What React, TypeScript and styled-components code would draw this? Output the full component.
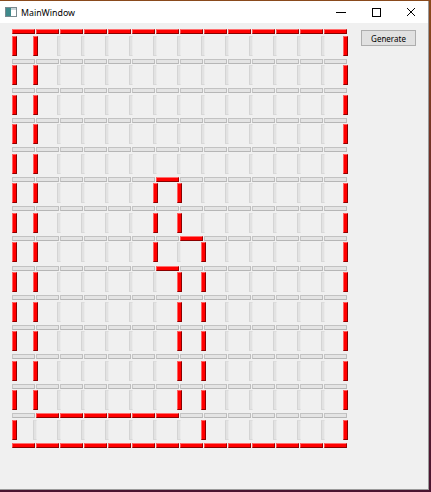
import React from 'react';
import styled, { createGlobalStyle } from 'styled-components';

const GlobalStyle = createGlobalStyle`
  html, body { margin: 0; padding: 0; }
  body {
    width: 431px;
    height: 492px;
    overflow: hidden;
    background: linear-gradient(180deg, #8a4a1c 0%, #6a2a2a 40%, #4a1430 100%);
    font-family: "Noto Sans", "Open Sans", Arial, sans-serif;
  }
`;

const Window = styled.div`
  margin-top: 1px;
  width: 428px;
  height: 488px;
  background: #f0f0f0;
  border-right: 1px solid #9a9a9a;
  border-bottom: 1px solid #9a9a9a;
  display: flex;
  flex-direction: column;
  position: relative;
`;

const TitleBar = styled.div`
  height: 22px;
  background: #ffffff;
  display: flex;
  align-items: center;
  padding-left: 5px;
  flex-shrink: 0;
`;

const TitleText = styled.span`
  font-family: "Noto Sans", "Open Sans", Arial, sans-serif;
  font-size: 8.8px;
  color: #000;
  margin-left: 4px;
  margin-top: 1px;
`;

const Controls = styled.div`
  margin-left: auto;
  display: flex;
  height: 100%;
`;

const CtrlButton = styled.div`
  width: 35px;
  height: 100%;
  display: flex;
  align-items: center;
  justify-content: center;
`;

const Body = styled.div`
  display: flex;
  align-items: flex-start;
  padding: 6px 0 0 12px;
  flex: 1;
`;

const Board = styled.div`
  display: flex;
  flex-direction: column;
  width: 336px;
`;

const WallRow = styled.div`
  display: flex;
  gap: 1px;
  height: 5px;
`;

const HWall = styled.div<{ $on: boolean }>`
  width: 23px;
  height: 5px;
  box-sizing: border-box;
  background: ${(p) => (p.$on ? '#ff0000' : '#e4e4e4')};
  border-top: 1px solid ${(p) => (p.$on ? '#ff7070' : '#c2c2c2')};
  border-left: 1px solid ${(p) => (p.$on ? '#ff5050' : '#c6c6c6')};
  border-right: 1px solid ${(p) => (p.$on ? '#9a0000' : '#bdbdbd')};
  border-bottom: 1px solid ${(p) => (p.$on ? '#8a0000' : '#b6b6b6')};
`;

const CellRow = styled.div`
  height: 24.57px;
  display: grid;
  grid-template-columns: 21px repeat(12, 24px) 22px 5px;
  align-items: start;
`;

const VWall = styled.div<{ $on: boolean }>`
  margin-top: 1.5px;
  width: ${(p) => (p.$on ? 5 : 4)}px;
  height: 20px;
  box-sizing: border-box;
  background: ${(p) => (p.$on ? '#ff0000' : '#e2e2e2')};
  border-left: 1px solid ${(p) => (p.$on ? '#ff6060' : '#d4d4d4')};
  border-top: 1px solid ${(p) => (p.$on ? '#ff6060' : '#dcdcdc')};
  border-right: 1px solid ${(p) => (p.$on ? '#8a0000' : '#ebebeb')};
  border-bottom: 1px solid ${(p) => (p.$on ? '#8a0000' : '#d8d8d8')};
`;

const GenerateButton = styled.button`
  margin-left: 13px;
  margin-top: 1px;
  width: 55px;
  height: 16px;
  padding: 0;
  box-sizing: border-box;
  background: #e1e1e1;
  border: 1px solid #adadad;
  font-family: "Noto Sans", "Open Sans", Arial, sans-serif;
  font-size: 8px;
  color: #000;
  display: flex;
  align-items: center;
  justify-content: center;
`;

const Grip = styled.div`
  position: absolute;
  right: 1px;
  bottom: 1px;
  width: 7px;
  height: 7px;
`;

const hRed = (line: number, col: number): boolean => {
  if (line === 0 || line === 14) return true;
  if (line === 5 && col === 6) return true;
  if (line === 7 && col === 7) return true;
  if (line === 8 && col === 6) return true;
  if (line === 13 && col >= 1 && col <= 6) return true;
  return false;
};

const vRed = (row: number, j: number): boolean => {
  if (j === 0 || j === 14) return true;
  if (j === 1) return row <= 12;
  if (j === 6) return row >= 5 && row <= 7;
  if (j === 7) return row === 5 || row === 6 || (row >= 8 && row <= 12);
  if (j === 8) return row >= 7;
  return false;
};

const AppIcon = () => (
  <svg width="12" height="10" viewBox="0 0 12 10">
    <rect x="0.5" y="0.5" width="11" height="9" fill="#ffffff" stroke="#7a8a90" />
    <rect x="1" y="1" width="5" height="8" fill="#3f8a8c" />
    <rect x="6" y="1" width="5" height="2" fill="#c8d4d8" />
  </svg>
);

export default function App() {
  const lines = Array.from({ length: 15 }, (_, i) => i);
  const cols = Array.from({ length: 14 }, (_, i) => i);
  const js = Array.from({ length: 15 }, (_, i) => i);
  return (
    <>
      <GlobalStyle />
      <Window>
        <TitleBar>
          <AppIcon />
          <TitleText>MainWindow</TitleText>
          <Controls>
            <CtrlButton>
              <svg width="10" height="10" viewBox="0 0 10 10">
                <line x1="0" y1="5.5" x2="10" y2="5.5" stroke="#000" strokeWidth="1" />
              </svg>
            </CtrlButton>
            <CtrlButton>
              <svg width="10" height="10" viewBox="0 0 10 10">
                <rect x="1.5" y="1.5" width="8" height="8" fill="none" stroke="#000" strokeWidth="1" />
              </svg>
            </CtrlButton>
            <CtrlButton>
              <svg width="10" height="10" viewBox="0 0 10 10">
                <path d="M1 1 L9 9 M9 1 L1 9" stroke="#000" strokeWidth="1" />
              </svg>
            </CtrlButton>
          </Controls>
        </TitleBar>
        <Body>
          <Board>
            {lines.map((line) => (
              <React.Fragment key={line}>
                <WallRow>
                  {cols.map((c) => (
                    <HWall key={c} $on={hRed(line, c)} />
                  ))}
                </WallRow>
                {line < 14 && (
                  <CellRow>
                    {js.map((j) => (
                      <VWall key={j} $on={vRed(line, j)} />
                    ))}
                  </CellRow>
                )}
              </React.Fragment>
            ))}
          </Board>
          <GenerateButton>Generate</GenerateButton>
        </Body>
        <Grip>
          <svg width="7" height="7" viewBox="0 0 7 7">
            <rect x="5" y="1" width="1" height="1" fill="#b0b0b0" />
            <rect x="3" y="3" width="1" height="1" fill="#b0b0b0" />
            <rect x="5" y="3" width="1" height="1" fill="#b0b0b0" />
            <rect x="1" y="5" width="1" height="1" fill="#b0b0b0" />
            <rect x="3" y="5" width="1" height="1" fill="#b0b0b0" />
            <rect x="5" y="5" width="1" height="1" fill="#b0b0b0" />
          </svg>
        </Grip>
      </Window>
    </>
  );
}
